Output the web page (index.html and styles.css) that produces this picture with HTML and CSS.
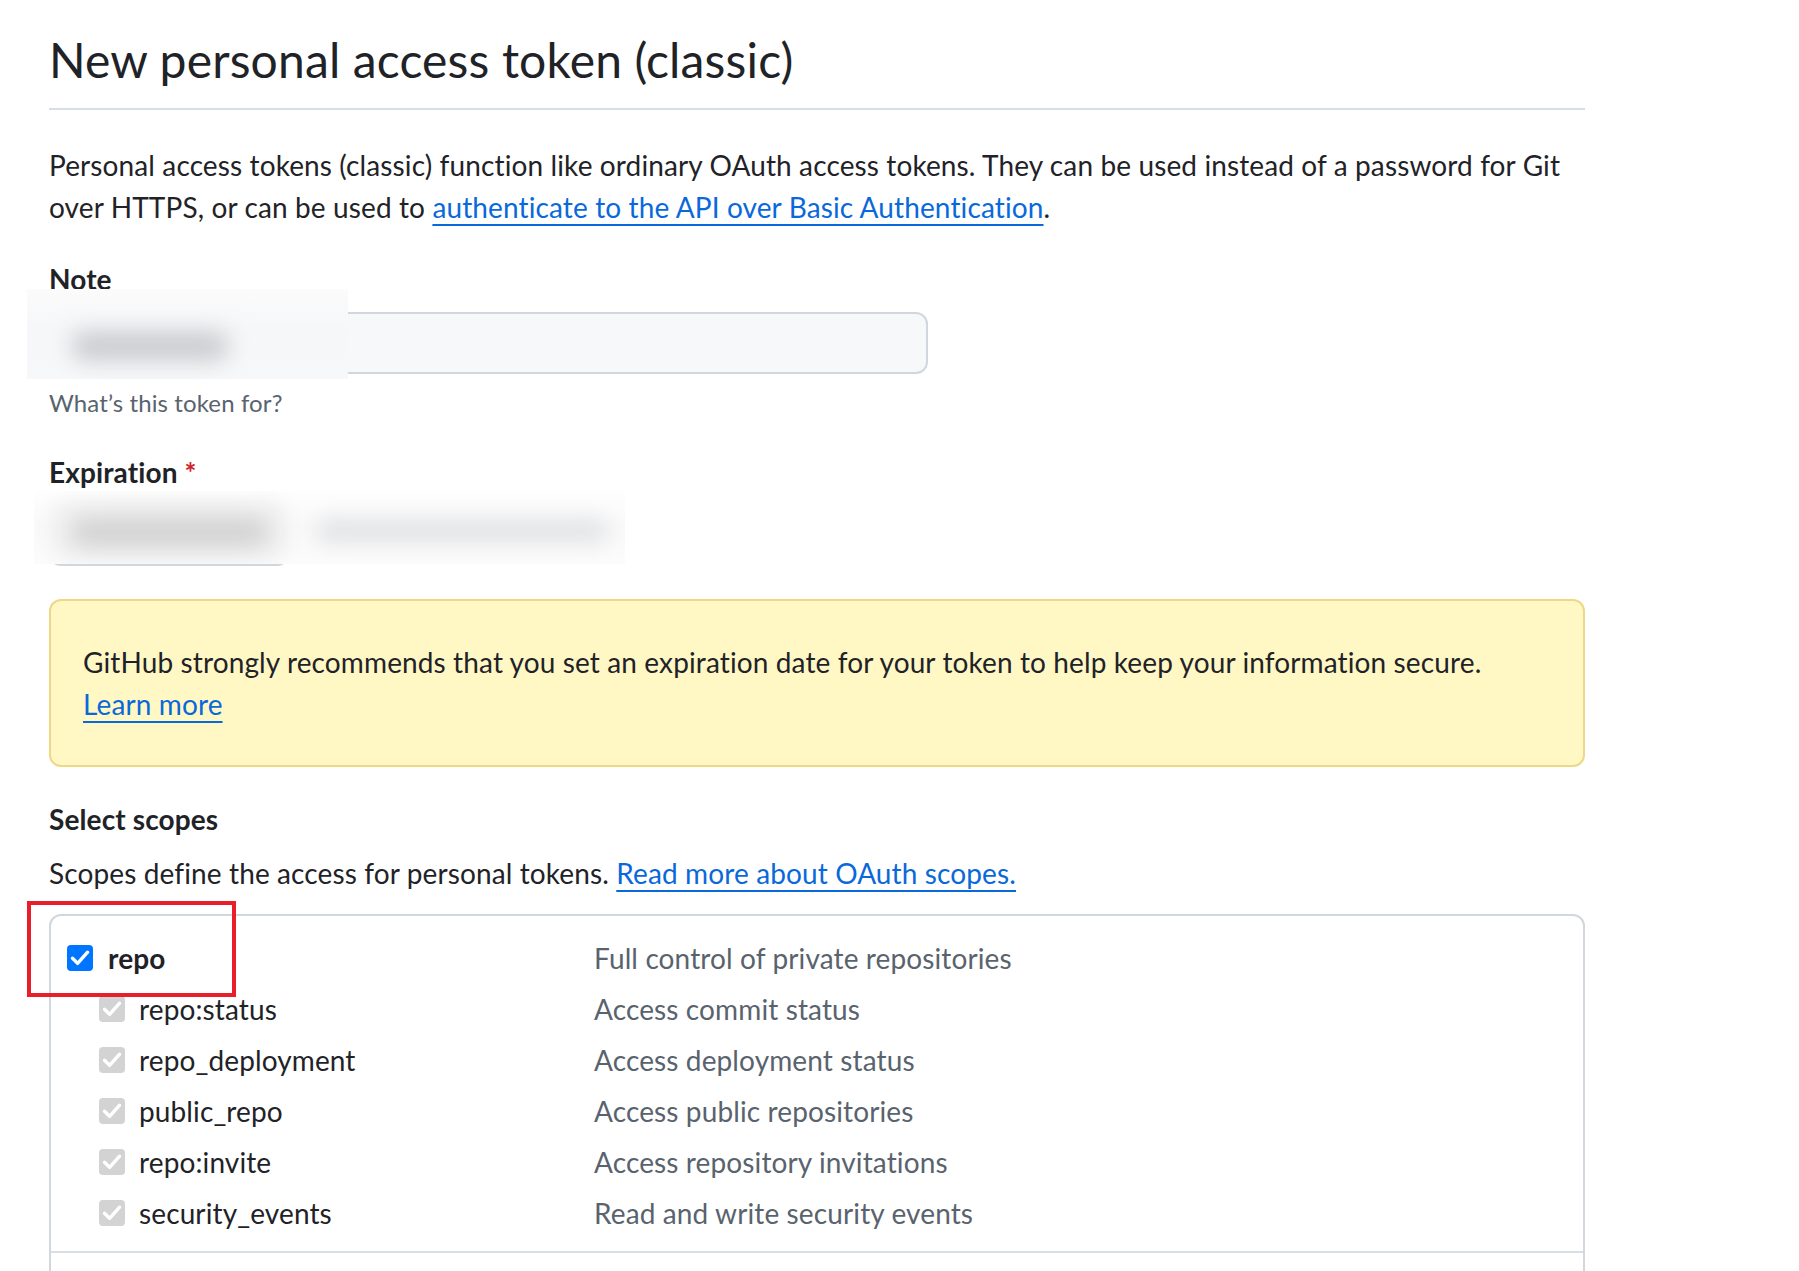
FILE: index.html
```html
<!DOCTYPE html>
<html lang="en">
<head>
<meta charset="utf-8">
<title>New personal access token (classic)</title>
<link rel="stylesheet" href="styles.css">
</head>
<body>
<main class="page">
  <div class="subhead">
    <h2 class="subhead-heading">New personal access token (classic)</h2>
  </div>

  <p class="intro">Personal access tokens (classic) function like ordinary OAuth access tokens. They can be used instead of a password for Git over HTTPS, or can be used to <a href="#">authenticate to the API over Basic Authentication</a>.</p>

  <div class="form-group note-group">
    <label class="label">Note</label>
    <div class="input"></div>
    <div class="redact redact-note"><span class="blob blob-note"></span></div>
    <p class="note">What’s this token for?</p>
  </div>

  <div class="form-group expiry-group">
    <label class="label">Expiration <span class="required">*</span></label>
    <div class="select-row">
      <div class="select"></div>
    </div>
    <div class="redact redact-expiry">
      <span class="blob blob-select-bg"></span>
      <span class="blob blob-select"></span>
      <span class="blob blob-date"></span>
    </div>
  </div>

  <div class="flash">
    GitHub strongly recommends that you set an expiration date for your token to help keep your information secure.<br>
    <a href="#">Learn more</a>
  </div>

  <h3 class="section-title">Select scopes</h3>
  <p class="section-desc">Scopes define the access for personal tokens. <a href="#">Read more about OAuth scopes.</a></p>

  <div class="scopes">
    <div class="scope-group">
      <div class="scope-row parent">
        <div class="scope-name">
          <span class="checkbox checked"><svg viewBox="0 0 26 26" width="26" height="26"><path d="M5.5 13.2 L10.6 18.4 L20.6 7.2" /></svg></span>
          <span class="scope-label">repo</span>
        </div>
        <div class="scope-desc">Full control of private repositories</div>
      </div>
      <div class="scope-row child">
        <div class="scope-name">
          <span class="checkbox disabled"><svg viewBox="0 0 26 26" width="26" height="26"><path d="M5.5 13.2 L10.6 18.4 L20.6 7.2" /></svg></span>
          <span class="scope-label">repo:status</span>
        </div>
        <div class="scope-desc">Access commit status</div>
      </div>
      <div class="scope-row child">
        <div class="scope-name">
          <span class="checkbox disabled"><svg viewBox="0 0 26 26" width="26" height="26"><path d="M5.5 13.2 L10.6 18.4 L20.6 7.2" /></svg></span>
          <span class="scope-label">repo_deployment</span>
        </div>
        <div class="scope-desc">Access deployment status</div>
      </div>
      <div class="scope-row child">
        <div class="scope-name">
          <span class="checkbox disabled"><svg viewBox="0 0 26 26" width="26" height="26"><path d="M5.5 13.2 L10.6 18.4 L20.6 7.2" /></svg></span>
          <span class="scope-label">public_repo</span>
        </div>
        <div class="scope-desc">Access public repositories</div>
      </div>
      <div class="scope-row child">
        <div class="scope-name">
          <span class="checkbox disabled"><svg viewBox="0 0 26 26" width="26" height="26"><path d="M5.5 13.2 L10.6 18.4 L20.6 7.2" /></svg></span>
          <span class="scope-label">repo:invite</span>
        </div>
        <div class="scope-desc">Access repository invitations</div>
      </div>
      <div class="scope-row child">
        <div class="scope-name">
          <span class="checkbox disabled"><svg viewBox="0 0 26 26" width="26" height="26"><path d="M5.5 13.2 L10.6 18.4 L20.6 7.2" /></svg></span>
          <span class="scope-label">security_events</span>
        </div>
        <div class="scope-desc">Read and write security events</div>
      </div>
    </div>
    <div class="scope-group last"></div>
    <div class="annotation"></div>
  </div>
</main>
</body>
</html>
```
FILE: styles.css
```css
html, body {
  margin: 0;
  padding: 0;
  background: #ffffff;
}

body {
  font-family: Lato, "Noto Sans", "Liberation Sans", sans-serif;
  font-size: 28px;
  line-height: 42px;
  letter-spacing: 0.12px;
  color: #1f2328;
}

.page {
  width: 1536px;
  padding-left: 49px;
}

a {
  color: #0969da;
  text-decoration: underline;
  text-decoration-thickness: 2px;
  text-underline-offset: 6px;
}

.subhead {
  padding-top: 30px;
  padding-bottom: 18px;
  border-bottom: 2px solid #d8dee4;
}

.subhead-heading {
  margin: 0;
  font-size: 48px;
  line-height: 60px;
  font-weight: 400;
  letter-spacing: 0.15px;
}

.intro {
  margin: 34px 0 0;
}

.form-group {
  position: relative;
  margin-top: 30px;
}

.label {
  display: block;
  font-weight: 700;
}

.required {
  color: #cf222e;
}

.input {
  margin-top: 12px;
  width: 879px;
  height: 62px;
  box-sizing: border-box;
  border: 2px solid #d0d7de;
  border-radius: 12px;
  background: #f6f8fa;
}

.note {
  margin: 11px 0 0;
  font-size: 24px;
  line-height: 36px;
  color: #59636e;
}

.select-row {
  margin-top: 9px;
  display: flex;
  align-items: center;
}

.select {
  width: 240px;
  height: 64px;
  box-sizing: border-box;
  border: 2px solid #d0d7de;
  border-radius: 12px;
  background: #f6f8fa;
}

/* blurred redactions laid over the form fields */
.redact {
  position: absolute;
  overflow: hidden;
}

.redact-note {
  left: -22px;
  top: 31px;
  width: 321px;
  height: 90px;
  background: linear-gradient(180deg, #fbfbfc 0%, #f6f7f8 45%, #f7f8f9 100%);
}

.redact-expiry {
  left: -15px;
  top: 40px;
  width: 591px;
  height: 73px;
  background: linear-gradient(180deg, #fefefe 0%, #f9f9fa 50%, #fcfcfc 100%);
}

.blob {
  position: absolute;
  display: block;
  border-radius: 20px;
}

.blob-note {
  left: 44px;
  top: 42px;
  width: 158px;
  height: 30px;
  background: #caccd0;
  filter: blur(11px);
}

.blob-select-bg {
  left: 15px;
  top: 8px;
  width: 240px;
  height: 62px;
  background: #f2f2f3;
  filter: blur(8px);
}

.blob-select {
  left: 36px;
  top: 26px;
  width: 200px;
  height: 30px;
  background: #d2d2d3;
  filter: blur(11px);
}

.blob-date {
  left: 282px;
  top: 27px;
  width: 292px;
  height: 26px;
  background: #e4e5e7;
  filter: blur(10px);
}

.flash {
  margin-top: 33px;
  padding: 40px 32px;
  border: 2px solid #eed888;
  border-radius: 12px;
  background: #fff8c5;
}

.section-title {
  margin: 31px 0 0;
  font-size: 28px;
  line-height: 42px;
  font-weight: 700;
}

.section-desc {
  margin: 12px 0 0;
}

.scopes {
  position: relative;
  margin-top: 20px;
  border: 2px solid #d0d7de;
  border-radius: 12px;
}

.scope-group {
  padding: 16px 16px 13px;
  border-bottom: 2px solid #d8dee4;
}

.scope-group.last {
  border-bottom: 0;
  height: 80px;
  padding: 0;
}

.scope-row {
  display: grid;
  grid-template-columns: 527px 1fr;
  align-items: center;
  height: 51px;
}

.scope-name {
  display: flex;
  align-items: center;
  gap: 15px;
}

.scope-row.parent .scope-label {
  font-weight: 700;
}

.scope-row.child .scope-name {
  padding-left: 32px;
  gap: 14px;
}

.scope-desc {
  color: #59636e;
}

.checkbox {
  width: 26px;
  height: 26px;
  box-sizing: border-box;
  border-radius: 4px;
  flex: none;
  display: block;
  border: 2px solid #767676;
  background: #fff;
}

.checkbox svg {
  display: block;
  margin: -2px;
}

.checkbox svg path {
  fill: none;
  stroke: #ffffff;
  stroke-width: 3.4;
  stroke-linecap: round;
  stroke-linejoin: round;
}

.checkbox.checked {
  background: #0075ff;
  border-color: #0075ff;
}

.checkbox.disabled {
  background: #d3d3d3;
  border-color: #d3d3d3;
}

.annotation {
  position: absolute;
  left: -24px;
  top: -15px;
  width: 209px;
  height: 96px;
  box-sizing: border-box;
  border: 4px solid #e81f2a;
}
```
